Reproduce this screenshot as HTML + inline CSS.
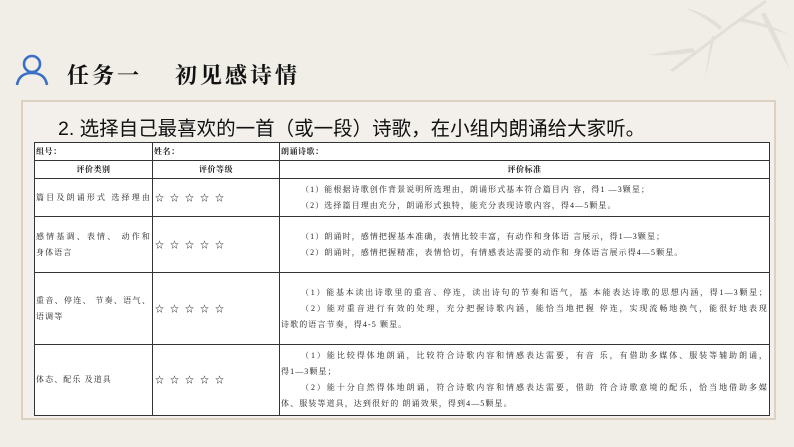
<!DOCTYPE html>
<html><head><meta charset="utf-8"><style>
*{margin:0;padding:0;box-sizing:border-box}
body{width:794px;height:447px;background:#f1eee8;position:relative;overflow:hidden;font-family:"Liberation Serif","Noto Serif CJK SC",serif}
.panel{position:absolute;left:21px;top:100px;width:755px;height:320px;background:#f3f0eb;border:2px solid #ddd2c2}
.title{position:absolute;top:59px;font-size:22px;font-weight:bold;letter-spacing:3px;color:#111;font-family:"Noto Serif CJK SC",serif;white-space:nowrap}
.h2{position:absolute;left:58px;top:112px;font-size:19.5px;color:#111;font-family:"Liberation Sans","Noto Sans CJK SC",sans-serif;white-space:nowrap}
table{position:absolute;left:34px;top:142px;width:736px;table-layout:fixed;border-collapse:collapse;background:#fff;font-size:8px;color:#222;letter-spacing:1.1px}
td{border:1px solid #333;padding:0 1px;vertical-align:middle;line-height:16px;white-space:nowrap;overflow:hidden}
.b{font-weight:bold;letter-spacing:0.5px}
.c{text-align:center}
.ind{text-indent:20px}
.j{text-align:justify;text-align-last:justify;text-justify:inter-character}
.s{letter-spacing:6px;font-size:9px;padding-left:2px}
</style></head><body>
<svg style="position:absolute;left:640px;top:0" width="154" height="90" viewBox="0 0 154 90">
<g fill="#dcd8d2" opacity=".7">
<path d="M30 70 L90 25 L92 27 L33 72Z"/>
<path d="M90 25 Q110 10 125 0 L127 2 Q112 14 92 27Z"/>
<path d="M55 52 Q35 56 8 55 Q35 50 53 48Z"/>
<path d="M75 36 Q70 55 65 80 Q68 55 72 36Z"/>
<path d="M100 18 Q125 22 150 35 Q125 26 98 21Z"/>
<path d="M80 30 Q62 15 45 8 Q65 12 82 27Z"/>
<path d="M125 12 Q140 40 150 70 Q135 45 121 14Z"/>
</g></svg>
<svg style="position:absolute;left:15px;top:53px" width="34" height="34" viewBox="0 0 34 34" fill="none" stroke="#3a6fc8" stroke-width="2.6">
<circle cx="17" cy="11" r="8"/><path d="M2 32 Q4 20 17 20 Q30 20 32 32"/></svg>
<div class="title" style="left:67px">任务一</div>
<div class="title" style="left:175px">初见感诗情</div>
<div class="panel"></div>
<div class="h2">2. 选择自己最喜欢的一首（或一段）诗歌，在小组内朗诵给大家听。</div>
<table>
<colgroup><col style="width:118px"><col style="width:127px"><col></colgroup>
<tr style="height:18px"><td class="b">组号：</td><td class="b">姓名：</td><td class="b">朗诵诗歌：</td></tr>
<tr style="height:18px"><td class="b c">评价类别</td><td class="b c">评价等级</td><td class="b c">评价标准</td></tr>
<tr style="height:38px"><td><div class="j">篇目及朗诵形式 选择理由</div></td><td class="s">☆☆☆☆☆</td><td><div class="ind">（1）能根据诗歌创作背景说明所选理由，朗诵形式基本符合篇目内 容，得1 —3颗星；</div><div class="ind">（2）选择篇目理由充分，朗诵形式独特，能充分表现诗歌内容，得4—5颗星。</div></td></tr>
<tr style="height:56px"><td><div class="j">感情基调、表情、 动作和</div>身体语言</td><td class="s">☆☆☆☆☆</td><td><div class="ind">（1）朗诵时，感情把握基本准确，表情比较丰富，有动作和身体语 言展示，得1—3颗星；</div><div class="ind">（2）朗诵时，感情把握精准，表情恰切，有情感表达需要的动作和 身体语言展示得4—5颗星。</div></td></tr>
<tr style="height:72px"><td><div class="j">重音、停连、 节奏、语气、</div>语调等</td><td class="s">☆☆☆☆☆</td><td><div class="ind j">（1）能基本读出诗歌里的重音、停连，读出诗句的节奏和语气，基 本能表达诗歌的思想内涵，得1—3颗星；</div><div class="ind j">（2）能对重音进行有效的处理，充分把握诗歌内涵，能恰当地把握 停连，实现流畅地换气，能很好地表现</div><div>诗歌的语言节奏，得4-5 颗星。</div></td></tr>
<tr style="height:71px"><td>体态、配乐 及道具</td><td class="s">☆☆☆☆☆</td><td><div class="ind j">（1）能比较得体地朗诵，比较符合诗歌内容和情感表达需要，有音 乐，有借助多媒体、服装等辅助朗诵，</div><div>得1—3颗星；</div><div class="ind j">（2）能十分自然得体地朗诵，符合诗歌内容和情感表达需要，借助 符合诗歌意境的配乐，恰当地借助多媒</div><div>体、服装等道具，达到很好的 朗诵效果，得到4—5颗星。</div></td></tr>
</table>
</body></html>
